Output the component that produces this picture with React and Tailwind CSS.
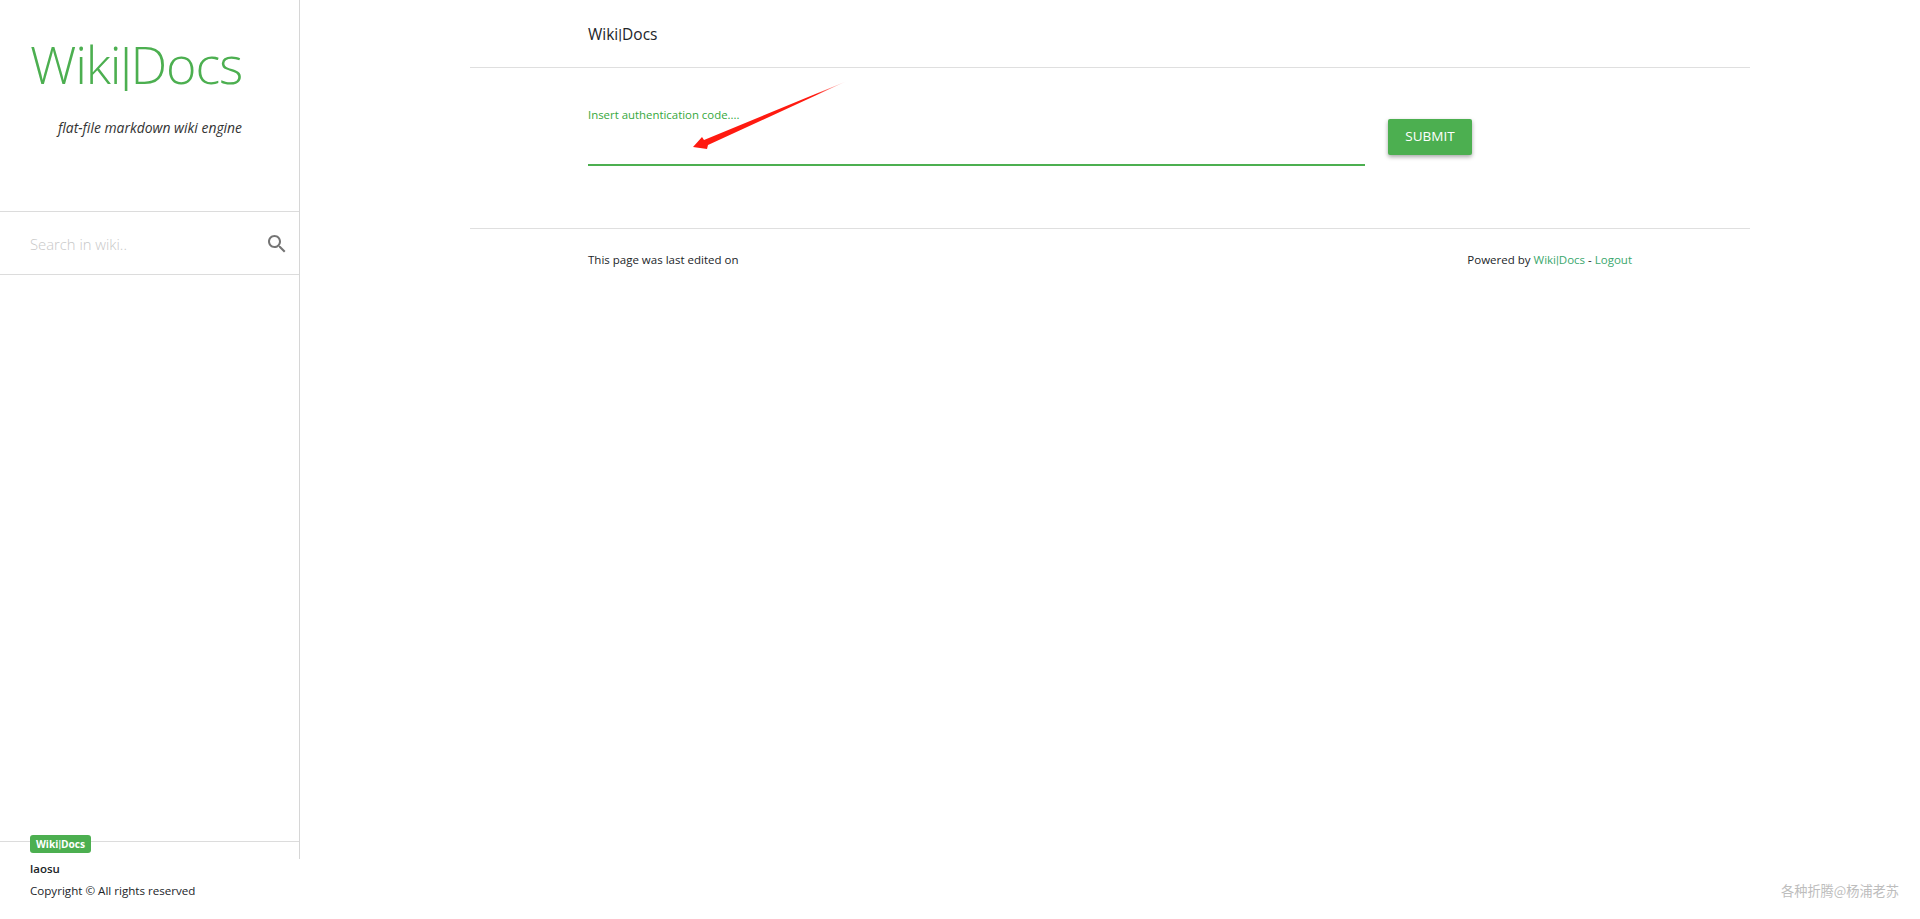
import React from "react";

function SearchIcon() {
  return (
    <svg viewBox="0 0 24 24" className="w-6 h-6 fill-[#757575]">
      <path d="M15.5 14h-.79l-.28-.27C15.41 12.59 16 11.11 16 9.5 16 5.91 13.09 3 9.5 3S3 5.91 3 9.5 5.91 16 9.5 16c1.61 0 3.09-.59 4.23-1.57l.27.28v.79l5 4.99L20.49 19l-4.99-5zm-6 0C7.01 14 5 11.99 5 9.5S7.01 5 9.5 5 14 7.01 14 9.5 11.99 14 9.5 14z" />
    </svg>
  );
}

function Arrow() {
  return (
    <svg className="absolute left-[680px] top-[70px] w-[180px] h-[90px]" viewBox="680 70 180 90">
      <defs>
        <linearGradient id="fade" x1="693" y1="147" x2="847" y2="81" gradientUnits="userSpaceOnUse">
          <stop offset="0" stopColor="#ff1a10" />
          <stop offset="0.8" stopColor="#ff1a10" />
          <stop offset="1" stopColor="#ff1a10" stopOpacity="0" />
        </linearGradient>
      </defs>
      <path d="M693 147 L702 137 L704 140 L847 81 L708 145 L707 149 Z" fill="url(#fade)" />
    </svg>
  );
}

// Open Sans has a very wide pipe, Roboto's is close to the reference
function Brand() {
  return (
    <>
      Wiki<span className="font-['Roboto',sans-serif]">|</span>Docs
    </>
  );
}

function Sidebar() {
  return (
    <aside className="w-[300px] h-[859px] shrink-0 border-r border-[#d6d6d6] flex flex-col">
      <div className="h-[211px] pl-[30px] pt-[28px]">
        <div className="text-[52px] leading-[72px] font-light text-[#4caf50] tracking-[-1.2px]">
          <Brand />
        </div>
        <div className="mt-[15px] ml-[28px] text-[13.9px] leading-[20px] italic text-[#333]">flat-file markdown wiki engine</div>
      </div>
      <div className="h-[64px] border-y border-[#dcdcdc] pl-[30px] pr-[10px] pt-[2px] flex items-center justify-between">
        <input
          placeholder="Search in wiki.."
          className="w-[200px] text-[14.8px] font-light outline-none placeholder:text-[#c8c8c8]"
        />
        <SearchIcon />
      </div>
      <div className="flex-1" />
      <div className="h-[18px] border-t border-[#dcdcdc] pl-[30px]">
        <span className="block w-fit -mt-[7px] h-[18px] px-[6px] rounded-[3px] bg-[#4caf50] text-white text-[10.2px] leading-[18px] font-bold">
          <Brand />
        </span>
        <div className="mt-[7px] text-[11.5px] leading-[18px] font-semibold text-[#212529]">laosu</div>
        <div className="mt-[4px] text-[11.6px] leading-[18px] text-[#212529]">Copyright © All rights reserved</div>
      </div>
    </aside>
  );
}

export default function App() {
  return (
    <div className="relative h-[919px] overflow-hidden flex bg-white text-[#212529] font-['Open_Sans',sans-serif]">
      <Sidebar />

      <main className="flex-1 flex justify-center">
        <div className="w-[1280px]">
          <header className="h-[68px] border-b border-[#dfdfdf] pl-[118px] pt-[23px] text-[15.5px] leading-[22px]">
            <Brand />
          </header>

          <form className="h-[161px] border-b border-[#dfdfdf] pl-[118px] flex items-start">
            <label className="w-[777px] h-[98px] border-b-2 border-[#4caf50] block pt-[38px] text-[11.4px] leading-[18px] text-[#35a83c]">
              Insert authentication code....
            </label>
            <button type="button" className="ml-[23px] mt-[51px] w-[84px] h-[36px] pb-[1px] rounded-[2px] bg-[#4caf50] text-white text-[13.5px] shadow-[0_2px_4px_rgba(0,0,0,0.35)]">SUBMIT</button>
          </form>

          <footer className="pl-[118px] pr-[118px] pt-[22px] flex justify-between text-[11.5px] leading-[18px]">
            <span>This page was last edited on</span>
            <span>
              Powered by <a className="text-[#3aa76d]"><Brand /></a> - <a className="text-[#3aa76d]">Logout</a>
            </span>
          </footer>
        </div>
      </main>

      <Arrow />
      <div className="absolute right-[21px] top-[882px] text-[13.2px] leading-[18px] text-[#bdbdbd] font-['Noto_Sans_CJK_SC',sans-serif]">各种折腾@杨浦老苏</div>
    </div>
  );
}
